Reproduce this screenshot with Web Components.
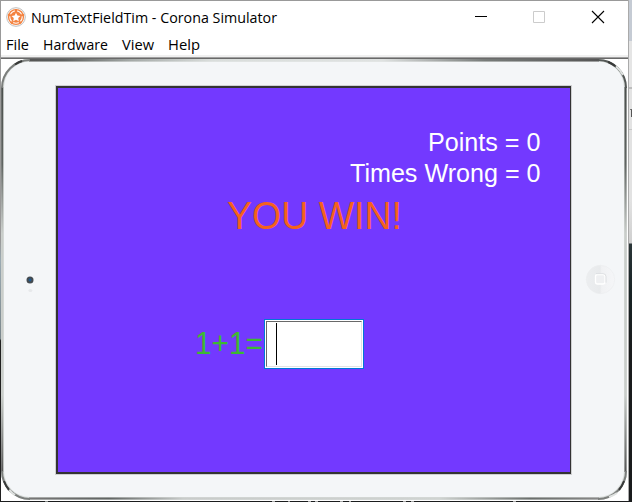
<!DOCTYPE html>
<html lang="en">
<head>
<meta charset="utf-8">
<title>NumTextFieldTim - Corona Simulator</title>
<style>
html,body{margin:0;width:632px;height:502px;overflow:hidden}
body{font-family:"Liberation Sans",Arial,sans-serif}
</style>
</head>
<body>
<desktop-area>
  <sim-window>
    <title-bar slot="title"></title-bar>
    <menu-bar slot="menu"></menu-bar>
    <tablet-device>
      <game-screen></game-screen>
    </tablet-device>
  </sim-window>
</desktop-area>
<script>
function define(name, html, setup) {
  customElements.define(name, class extends HTMLElement {
    constructor() {
      super();
      this.attachShadow({mode: 'open'}).innerHTML = html;
    }
    connectedCallback() { if (setup) setup(this); }
  });
}

// One line of text fitted to a given width: w, size, base (baseline), h.
define('fit-text', `<style>
:host{display:block;flex:none}
svg{display:block;overflow:visible}
text{fill:currentColor}
</style><svg><text x="0" lengthAdjust="spacingAndGlyphs"></text></svg>`, el => {
  const a = n => el.getAttribute(n);
  const svg = el.shadowRoot.querySelector('svg'), t = svg.firstElementChild;
  svg.setAttribute('width', a('w'));
  svg.setAttribute('height', a('h'));
  t.setAttribute('y', a('base'));
  t.setAttribute('font-size', a('size'));
  t.setAttribute('textLength', a('w'));
  t.textContent = a('text');
});

define('desktop-area', `<style>
:host{display:grid;grid-template-columns:628px 4px;grid-template-rows:501px 1px;width:632px;height:502px;background:#1b1d1e}
.side{background:linear-gradient(#c5cbd4 0 41px,#e5e5e5 41px 87px,#bdbdbd 87px 89px,#e3e3e3 89px 129px,#c8c8c8 129px 130px,#e2e2e2 130px 200px,#cfcfcf 243px,#2b3638 244px,#182325 290px,#191b1c 350px);border-left:1px solid #aaa;box-sizing:border-box;display:flex;justify-content:flex-end;padding-top:109px}
.side i{width:2px;height:8px;border-right:1px solid #555;border-top:1px solid #777;box-sizing:border-box}
.foot{grid-column:1/3;background:linear-gradient(90deg,#1b1d1e 45px,#8a8f8d 45px 48px,#1b1d1e 48px 272px,#aaa 272px 275px,#1b1d1e 275px 288px,#999 288px 290px,#1b1d1e 290px 308px,#aaa 308px 311px,#1b1d1e 311px 315px,#aaa 315px 318px,#1b1d1e 318px 340px,#aaa 340px 343px,#1b1d1e 343px 349px,#aaa 349px 351px,#1b1d1e 351px 403px,#aaa 403px 406px,#1b1d1e 406px 411px,#aaa 411px 414px,#1b1d1e 414px 513px,#aaa 513px 516px,#1b1d1e 516px)}
</style><slot></slot><div class="side"><i></i></div><div class="foot"></div>`);

define('sim-window', `<style>
:host{display:flex;flex-direction:column;box-sizing:border-box;width:628px;height:501px;background:#fff;border-top:1px solid #999;border-left:1px solid;border-image:linear-gradient(#999 0 240px,#9baab2 260px,#7b878c 338px,#202020 340px) 1}
.rule{height:4px;flex:none;background:linear-gradient(#f0f0f0 0 2px,#a0a0a0 2px 3px,#696969 3px)}
</style><slot name="title"></slot><slot name="menu"></slot><div class="rule"></div><slot></slot>`);

define('title-bar', `<style>
:host{display:flex;height:33px;flex:none;color:#000;font-family:"Open Sans","Noto Sans",sans-serif}
.logo{margin:6px 5px 0 5px}
.gap{flex:1}
svg.c{width:59px;height:33px;flex:none}
</style>
<svg class="logo" width="20" height="20" viewBox="0 0 20 20"><circle cx="10" cy="10" r="9.3" fill="#fff" stroke="#bdbdbd"/><circle cx="10" cy="10" r="8.1" fill="#f48341"/><circle cx="10" cy="10" r="6.2" fill="none" stroke="#fff" stroke-width="1.1"/><path d="M10 5.700l1.400 2.800 3.100.4-2.300 2.200.6 3.100-2.800-1.500-2.800 1.500.6-3.100-2.300-2.200 3.100-.4z" fill="#fff"/><path d="M10 2v3M18 7.800l-3 .7M15 16.500l-1.900-2.200M5 16.500l1.900-2.200M2 7.800l3 .7" stroke="#f48341" stroke-width="2"/></svg>
<fit-text text="NumTextFieldTim - Corona Simulator" w="246" h="33" size="14.7" base="22"></fit-text>
<div class="gap"></div>
<svg class="c" viewBox="0 0 59 33"><path d="M24 15.500h12" stroke="#000"/></svg>
<svg class="c" viewBox="0 0 59 33"><path d="M23.500 10.500h11v11h-11z" fill="none" stroke="#ccc"/></svg>
<svg class="c" viewBox="0 0 59 33"><path d="M23 10l12 12M35 10L23 22" stroke="#000" stroke-width="1.1"/></svg>`);

define('menu-bar', `<style>
:host{display:flex;gap:14px;height:21px;flex:none;padding-left:5px;color:#000;font-family:"Open Sans","Noto Sans",sans-serif}
</style>
<fit-text text="File" w="23" h="20" size="14.7" base="16"></fit-text>
<fit-text text="Hardware" w="65" h="20" size="14.7" base="16"></fit-text>
<fit-text text="View" w="32" h="20" size="14.7" base="16"></fit-text>
<fit-text text="Help" w="32" h="20" size="14.7" base="16"></fit-text>`);

define('tablet-device', `<style>
:host{display:grid;width:626px;height:442px;grid-template:442px/626px}
:host>svg,.face{grid-area:1/1}
.face{display:grid;grid-template-columns:55px 515px 56px;padding-top:27px;box-sizing:border-box;z-index:1}
.cam{margin:190px 0 0 24px}
.home{margin:178px 0 0 14px}
</style>
<svg width="626" height="442" viewBox="0 0 626 442">
<defs>
<linearGradient id="t"><stop stop-color="#555"/><stop offset=".06" stop-color="#5c5f5e"/><stop offset=".18" stop-color="#a5aaa8"/><stop offset=".32" stop-color="#d9dddb"/><stop offset=".62" stop-color="#dfe2e1"/><stop offset=".8" stop-color="#777b79"/><stop offset="1" stop-color="#555"/></linearGradient>
<linearGradient id="b"><stop stop-color="#777"/><stop offset=".14" stop-color="#606463"/><stop offset=".27" stop-color="#c8cbca"/><stop offset=".72" stop-color="#cfd3d1"/><stop offset=".88" stop-color="#6a6e6c"/><stop offset="1" stop-color="#888"/></linearGradient>
<linearGradient id="s" x2="0" y2="1"><stop stop-color="#4b4f4d"/><stop offset=".2" stop-color="#606462"/><stop offset=".38" stop-color="#c9cdca"/><stop offset=".8" stop-color="#c9cdca"/><stop offset="1" stop-color="#555"/></linearGradient>
</defs>
<rect x="0" y="0" width="626" height="441" rx="29" fill="#d7dbd9"/>
<rect x="3" y="2.500" width="620" height="435.500" rx="26" fill="#f4f6f8"/>
<rect x="28" y="0" width="570" height="2.500" fill="url(#t)"/>
<rect x="28" y="438.500" width="570" height="2" fill="url(#b)"/>
<rect x=".2" y="28" width="2" height="385" fill="url(#s)"/>
<rect x="623.500" y="28" width="2" height="385" fill="url(#s)"/>
<g fill="none" stroke-width="2">
<path d="M1 29A28 28 0 0 1 29 1" stroke="#7b7e7c"/><path d="M597 1A28 28 0 0 1 625 29" stroke="#555957"/>
<path d="M1 412A28 28 0 0 0 29 440M625 412A28 28 0 0 1 597 440" stroke="#7b7e7c"/>
<path d="M615 7.500A28 28 0 0 1 622 16M7.600 430A28 28 0 0 0 14 436M616 434A28 28 0 0 1 608 438" stroke="#dfe2e0"/>
<path d="M14 5.500A28 28 0 0 1 21 2M607 3A28 28 0 0 1 614 7M3 422A28 28 0 0 0 8 431M623 422A28 28 0 0 1 618 431" stroke="#383a39"/>
</g>
</svg>
<div class="face">
<svg class="cam" width="12" height="20"><circle cx="5" cy="4" r="3.500" fill="#444b50"/><circle cx="5" cy="4" r="1.400" fill="#205b93"/><ellipse cx="5.400" cy="14.500" rx="2" ry="1.500" fill="#e7e9eb"/></svg>
<slot></slot>
<svg class="home" width="32" height="32"><defs><linearGradient id="h"><stop stop-color="#eceef0"/><stop offset=".48" stop-color="#e8eaec"/><stop offset=".54" stop-color="#f0f1f3"/><stop offset="1" stop-color="#f5f6f8"/></linearGradient></defs><circle cx="15.500" cy="15.500" r="14.200" fill="url(#h)" stroke="#ebedef" stroke-width=".6"/><rect x="10.500" y="10.500" width="9.500" height="9.500" rx="2" fill="#eff0f2" stroke="#fff" stroke-width="1.300"/><path d="M11 9.700h7q3 0 3 3v6" fill="none" stroke="#d7d9dc" stroke-width=".8"/></svg>
</div>`);

define('game-screen', `<style>
:host{display:flex;flex-direction:column;box-sizing:border-box;width:515px;height:388px;background:#7339ff;border:solid #333;border-width:2px 1px 2px 2px;box-shadow:0 0 0 1px #cfd0d2}
.score{display:flex;flex-direction:column;align-items:flex-end;color:#fff;padding:38px 30px 0 0}
.win{color:#f4621d;padding-left:169px}
.ask{display:flex;padding:79px 0 0 137px;color:#3db832}
.ask fit-text{width:70px}
</style>
<div class="score">
<fit-text text="Points = 0" w="112.500" h="31" size="25.500" base="25"></fit-text>
<fit-text text="Times Wrong = 0" w="190.500" h="31" size="25.500" base="25"></fit-text>
</div>
<fit-text class="win" text="YOU WIN!" w="175" h="52" size="39.500" base="41"></fit-text>
<div class="ask"><fit-text text="1+1=" w="68" h="50" size="31" base="34.500"></fit-text><number-field></number-field></div>`);

define('number-field', `<style>
:host{display:block;box-sizing:border-box;width:100px;height:50px;border:1px solid #0078d7;background:#fff;padding:1px;margin-left:-1px}
.in{box-sizing:border-box;height:46px;border:1px solid;border-color:#696969 #e3e3e3 #e3e3e3 #696969;padding:1px 0 0 9px}
.caret{width:1px;height:42px;background:#000}
</style><div class="in"><div class="caret"></div></div>`);
</script>
</body>
</html>
